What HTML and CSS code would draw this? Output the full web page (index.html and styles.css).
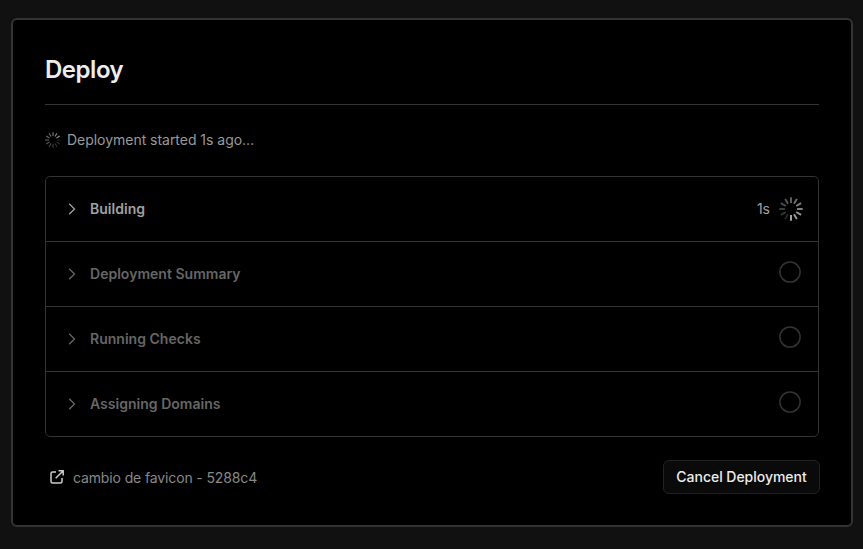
FILE: index.html
```html
<!DOCTYPE html>
<html lang="en">
<head>
<meta charset="utf-8">
<title>Deploy</title>
<link rel="stylesheet" href="styles.css">
</head>
<body>
<main class="card">
  <h1 class="title"><span>Deploy</span></h1>
  <p class="status">
    <svg class="spinner-small" viewBox="-12 -12 24 24" data-start="2"></svg>
    <span>Deployment started 1s ago...</span>
  </p>
  <ul class="steps">
    <li class="step active">
      <svg class="chevron" viewBox="0 0 8 12"><path d="M1.200 .7l5.300 5.300-5.300 5.300"/></svg>
      <span class="name">Building</span>
      <span class="time">1s</span>
      <svg class="spinner" viewBox="-12 -12 24 24" data-start="6"></svg>
    </li>
    <li class="step">
      <svg class="chevron" viewBox="0 0 8 12"><path d="M1.200 .7l5.300 5.300-5.300 5.300"/></svg>
      <span class="name">Deployment Summary</span>
      <svg class="pending" viewBox="0 0 22 22"><circle cx="11" cy="11" r="10.1"/></svg>
    </li>
    <li class="step">
      <svg class="chevron" viewBox="0 0 8 12"><path d="M1.200 .7l5.300 5.300-5.300 5.300"/></svg>
      <span class="name">Running Checks</span>
      <svg class="pending" viewBox="0 0 22 22"><circle cx="11" cy="11" r="10.1"/></svg>
    </li>
    <li class="step">
      <svg class="chevron" viewBox="0 0 8 12"><path d="M1.200 .7l5.300 5.300-5.300 5.300"/></svg>
      <span class="name">Assigning Domains</span>
      <svg class="pending" viewBox="0 0 22 22"><circle cx="11" cy="11" r="10.1"/></svg>
    </li>
  </ul>
  <footer class="footer">
    <a class="commit">
      <svg class="external" viewBox="0 0 14 14"><path d="M6 2H2.5Q1 2 1 3.5v8Q1 13 2.5 13h8q1.500 0 1.500-1.500V8M8.500 .8H13.200V5.500M13 1L5.700 8.300"/></svg>
      <span>cambio de favicon - 5288c4</span>
    </a>
    <button class="cancel" type="button">Cancel Deployment</button>
  </footer>
</main>
<script src="spinner.js"></script>
</body>
</html>
```
FILE: styles.css
```css
* { box-sizing: border-box; }
body {
  margin: 0;
  height: 549px;
  padding: 18px 10px 22px 11px;
  background: #111;
  color: #888;
  font-family: Inter, sans-serif;
  font-size: 14px;
  line-height: 20px;
  overflow: hidden;
}
svg { display: block; flex: none; fill: none; }
.card {
  height: 509px;
  padding: 32px;
  background: #000;
  border: 2px solid #333;
  border-radius: 6px;
}
.title {
  margin: 0;
  height: 53px;
  border-bottom: 1px solid #333;
  color: #ededed;
  font-size: 24px;
  font-weight: 600;
  line-height: 35px;
  letter-spacing: -0.47px;
}
.status {
  display: flex;
  align-items: center;
  gap: 6px;
  margin: 25px 0 26px;
  color: #999;
  letter-spacing: -0.03px;
}
.spinner-small { width: 16px; height: 16px; margin-top: -1px; opacity: .85; }
.spinner { width: 24px; height: 24px; margin: 0 -2px 0 9px; }
.spinner line, .spinner-small line { stroke: #ededed; stroke-width: 1.9; }
.spinner-small line { stroke-width: 1.7; }
.steps {
  margin: 0;
  padding: 0;
  list-style: none;
  border: 1px solid #333;
  border-radius: 5px;
}
.step {
  display: flex;
  align-items: center;
  height: 65px;
  padding: 0 17px 1px 22px;
  border-bottom: 1px solid #333;
  color: #666;
}
.step:last-child { height: 64px; border-bottom: 0; }
.active { padding-bottom: 0; color: #a1a1a1; }
.chevron { width: 8px; height: 12px; margin-right: 14px; stroke: currentColor; stroke-width: 1.3; }
.name { flex: 1; font-weight: 600; letter-spacing: 0.02px; }
.pending { width: 22px; height: 22px; margin-bottom: 3px; stroke: #333; stroke-width: 1.5; }
.footer { display: flex; justify-content: space-between; margin: 23px -1px 0 0; }
.commit { display: flex; align-items: center; padding-left: 5px; height: 35px; letter-spacing: -0.13px; }
.external { width: 14px; height: 14px; margin: -1px 9px 0 0; stroke: #ccc; stroke-width: 1.5; }
.cancel {
  width: 157px;
  height: 34px;
  padding: 0;
  border: 1px solid #222;
  border-radius: 6px;
  background: #0a0a0a;
  color: #ededed;
  font: 550 14px/20px Inter, sans-serif;
  letter-spacing: -0.03px;
}
```
FILE: spinner.js
```js
document.querySelectorAll('[data-start]').forEach(function (svg) {
  var start = Number(svg.dataset.start);
  for (var i = 0; i < 12; i++) {
    var line = document.createElementNS('http://www.w3.org/2000/svg', 'line');
    line.setAttribute('y1', '-6');
    line.setAttribute('y2', '-11.7');
    line.setAttribute('transform', 'rotate(' + i * 30 + ')');
    line.setAttribute('opacity', 0.72 - ((start - i + 12) % 12) * 0.05);
    svg.appendChild(line);
  }
});
```
